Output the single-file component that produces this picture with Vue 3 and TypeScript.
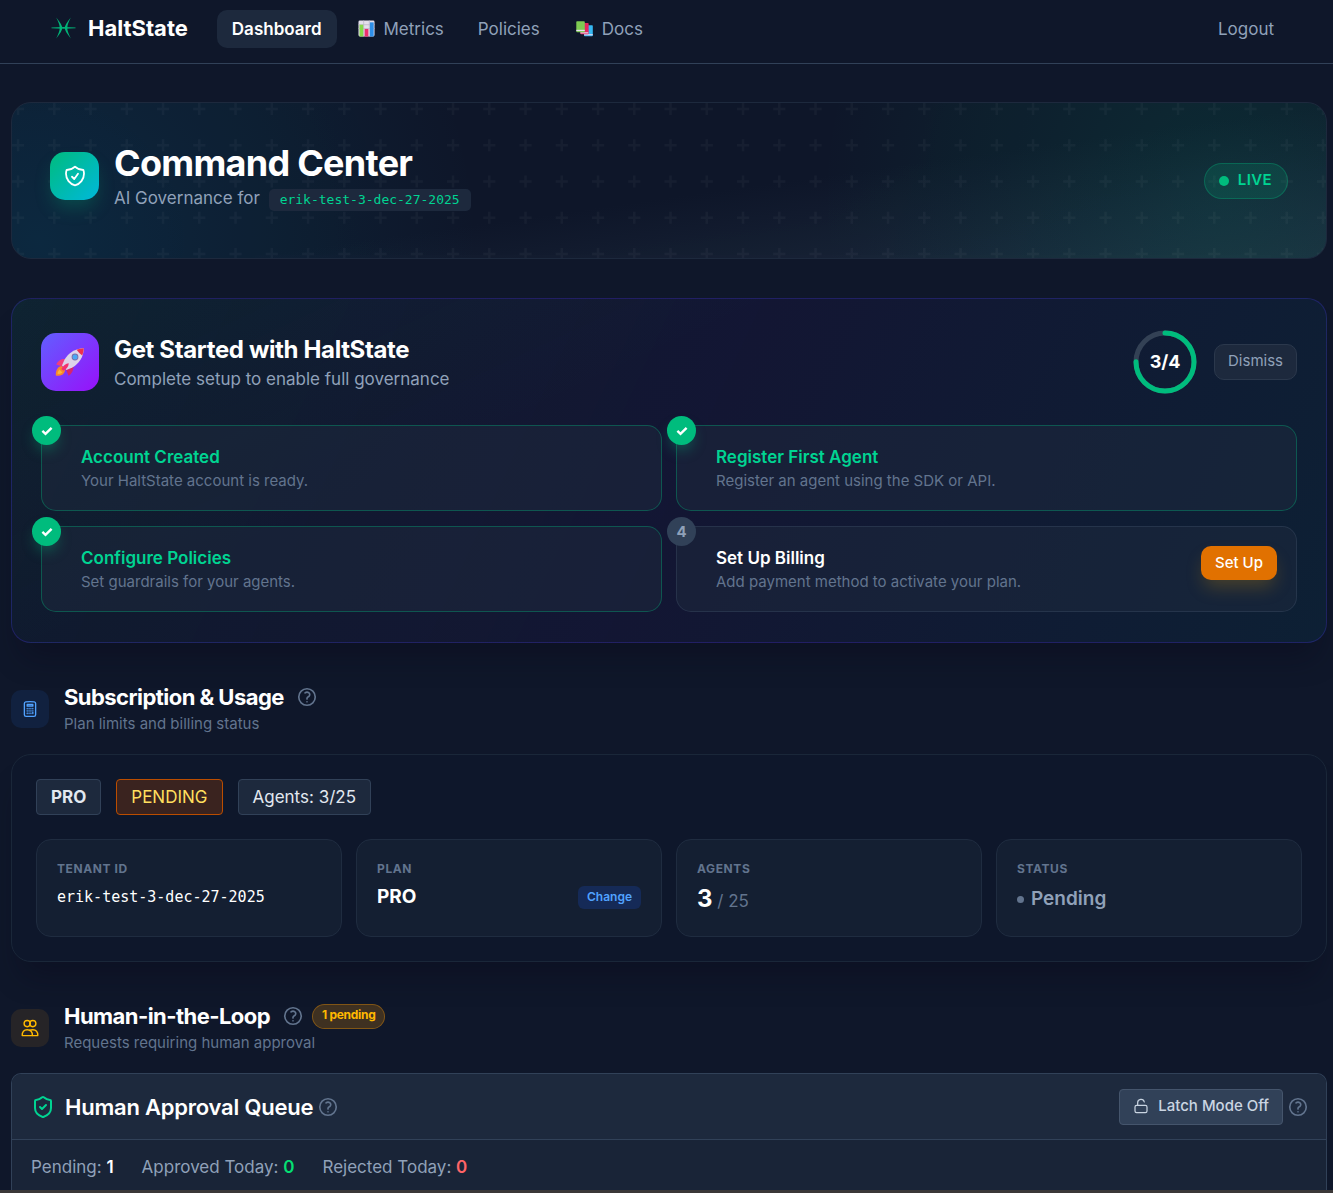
<script setup lang="ts">
import { computed, ref } from 'vue'

interface Step {
  id: number
  title: string
  text: string
  done: boolean
}

const tenantId = 'erik-test-3-dec-27-2025'

const steps = ref<Step[]>([
  { id: 1, title: 'Account Created', text: 'Your HaltState account is ready.', done: true },
  { id: 2, title: 'Register First Agent', text: 'Register an agent using the SDK or API.', done: true },
  { id: 3, title: 'Configure Policies', text: 'Set guardrails for your agents.', done: true },
  { id: 4, title: 'Set Up Billing', text: 'Add payment method to activate your plan.', done: false },
])

const doneCount = computed(() => steps.value.filter((s) => s.done).length)
const circumference = 2 * Math.PI * 29
const ringDash = computed(
  () => `${(doneCount.value / steps.value.length) * circumference} ${circumference}`,
)

const helpPath =
  'M9.879 7.519c1.171-1.025 3.071-1.025 4.242 0 1.172 1.025 1.172 2.687 0 3.712-.203.179-.43.326-.67.442-.745.361-1.45.999-1.45 1.827v.75M21 12a9 9 0 11-18 0 9 9 0 0118 0zm-9 5.25h.008v.008H12v-.008z'
</script>

<template>
  <div class="page">
    <header class="topbar">
      <a class="brand" href="#">
        <svg class="brand-mark" viewBox="0 0 26 22" aria-hidden="true">
          <path d="M0.5 10.6 L13 10 L25.5 10.6 L25.5 11.2 L13 11.8 L0.5 11.2Z" />
          <path d="M5.4 0.2 Q12.6 9 11.4 11 Q12.6 13 5.4 21.8 Q9.4 14 9 11 Q9.4 8 5.4 0.2Z" />
          <path d="M20.6 0.2 Q13.4 9 14.6 11 Q13.4 13 20.6 21.8 Q16.6 14 17 11 Q16.6 8 20.6 0.2Z" />
        </svg>
        <span>HaltState</span>
      </a>
      <nav class="links">
        <a class="link active" href="#">Dashboard</a>
        <a class="link" href="#">
          <svg class="emoji" viewBox="0 0 18 18" aria-hidden="true">
            <rect x="0.5" y="0.5" width="17" height="17" rx="1.5" fill="#e4dfec" />
            <path d="M0.5 5h17M0.5 9h17M6 0.5v17M12 0.5v17" stroke="#bdb6ca" stroke-width="0.8" />
            <rect x="1.6" y="5" width="4" height="12.5" fill="#86d94a" />
            <rect x="7" y="9.5" width="4" height="8" fill="#ec2f6e" />
            <rect x="12.6" y="2.5" width="4" height="15" fill="#2e8fe8" />
          </svg>
          <span>Metrics</span>
        </a>
        <a class="link" href="#">Policies</a>
        <a class="link" href="#">
          <svg class="emoji" viewBox="0 0 18 18" aria-hidden="true">
            <rect x="8.5" y="5.5" width="9.3" height="11.6" rx="0.8" fill="#35b8f2" />
            <path d="M8.5 15h9.3v1.2H8.5z" fill="#e6d9f5" />
            <rect x="4.6" y="3.2" width="8.8" height="12" rx="0.8" fill="#e5265f" />
            <path d="M4.6 13h8.4v1.2H4.6z" fill="#e8dff0" />
            <rect x="0.3" y="1.3" width="9" height="11.6" rx="0.8" fill="#7ecb52" />
            <path d="M0.3 10.4h9v1.3h-9z" fill="#e8e2f0" />
          </svg>
          <span>Docs</span>
        </a>
      </nav>
      <a class="link" href="#">Logout</a>
    </header>

    <main class="content">
      <section class="hero">
        <svg class="hero-pattern" aria-hidden="true">
          <defs>
            <pattern id="plus" width="145" height="145" viewBox="0 0 120 120" patternUnits="userSpaceOnUse">
              <path
                d="M0 5h10M30 5h10M60 5h10M90 5h10M0 35h10M30 35h10M60 35h10M90 35h10M0 65h10M30 65h10M60 65h10M90 65h10M0 95h10M30 95h10M60 95h10M90 95h10M5 0v10M35 0v10M65 0v10M95 0v10M5 30v10M35 30v10M65 30v10M95 30v10M5 60v10M35 60v10M65 60v10M95 60v10M5 90v10M35 90v10M65 90v10M95 90v10"
                stroke="#fff"
                stroke-width="2"
              />
            </pattern>
          </defs>
          <rect width="100%" height="100%" fill="url(#plus)" />
        </svg>
        <div class="hero-main">
          <div class="hero-icon">
            <svg class="line-icon" viewBox="0 0 24 24" width="24" height="24" aria-hidden="true">
              <path d="M9 12.75L11.25 15 15 9.75m-3-7.036A11.959 11.959 0 013.598 6 11.99 11.99 0 003 9.749c0 5.592 3.824 10.29 9 11.623 5.176-1.332 9-6.03 9-11.622 0-1.31-.21-2.571-.598-3.751h-.152c-3.196 0-6.1-1.248-8.25-3.285z" />
            </svg>
          </div>
          <div>
            <h1>Command Center</h1>
            <p>AI Governance for <code>{{ tenantId }}</code></p>
          </div>
        </div>
        <div class="live"><i class="live-dot"></i>LIVE</div>
      </section>

      <section class="setup">
        <div class="setup-head">
          <div class="rocket">
            <svg viewBox="0 0 30 30" width="30" height="30" aria-hidden="true">
              <path d="M7 19 C3 19 .8 23 .8 28 Q.8 29 2 28.8 C7 28.8 9.6 27 10 23Z" fill="#f9872b" />
              <path d="M4.4 22.4 Q2.6 24.4 2.6 27 Q5.4 27 7.4 25.4Z" fill="#fcb53b" />
              <path d="M10 12 Q4 11.5 1.2 17.6 L9 20 12 14Z" fill="#f23e7c" />
              <path d="M18.5 20 Q18 26 13.6 28.8 L10.4 21 16 18Z" fill="#d6266c" />
              <path d="M28.8 1.2 C20 1.4 13.4 6 9.6 12.6 L7 18.6 11.4 23 17.4 20.4 C24 16.6 28.6 10 28.8 1.2Z" fill="#ddd3ea" />
              <path d="M28.8 1.2 C26 1.3 23.6 1.9 21.6 2.8 Q24 6.4 27.2 8.4 Q28.7 5 28.8 1.2Z" fill="#ef2f4c" />
              <path d="M13.8 16.2 Q9 16.6 6.4 22 L8.4 23.8 Q13.4 21 13.8 16.2Z" fill="#f4316d" />
              <circle cx="20" cy="10" r="3.4" fill="#7a6fa8" />
              <circle cx="20" cy="10" r="2.5" fill="#4aa8f4" />
            </svg>
          </div>
          <div class="setup-title">
            <h2>Get Started with HaltState</h2>
            <p>Complete setup to enable full governance</p>
          </div>
          <div class="ring">
            <svg viewBox="0 0 68 68" width="68" height="68" aria-hidden="true">
              <circle cx="34" cy="34" r="29" stroke="#334155" />
              <circle
                cx="34"
                cy="34"
                r="29"
                stroke="#00bc7d"
                stroke-linecap="round"
                :stroke-dasharray="ringDash"
                transform="rotate(-90 34 34)"
              />
            </svg>
            <span>{{ doneCount }}/{{ steps.length }}</span>
          </div>
          <button class="dismiss" type="button">Dismiss</button>
        </div>

        <div class="steps">
          <article v-for="step in steps" :key="step.id" class="step" :class="{ done: step.done }">
            <span class="step-badge">
              <svg v-if="step.done" viewBox="0 0 12 12" width="12" height="12" aria-hidden="true">
                <path d="M1.4 5.8 L4.5 8.8 L10.6 2.8" />
              </svg>
              <template v-else>{{ step.id }}</template>
            </span>
            <div class="step-text">
              <h3>{{ step.title }}</h3>
              <p>{{ step.text }}</p>
            </div>
            <button v-if="!step.done" class="setup-btn" type="button">Set Up</button>
          </article>
        </div>
      </section>

      <div class="section-head">
        <div class="section-icon blue">
          <svg class="line-icon" viewBox="0 0 24 24" width="18" height="18" aria-hidden="true">
            <path d="M15.75 15.75V18m-7.5-6.75h.008v.008H8.25v-.008zm0 2.25h.008v.008H8.25V13.5zm0 2.25h.008v.008H8.25v-.008zm0 2.25h.008v.008H8.25V18zm2.498-6.75h.007v.008h-.007v-.008zm0 2.25h.007v.008h-.007V13.5zm0 2.25h.007v.008h-.007v-.008zm0 2.25h.007v.008h-.007V18zm2.504-6.75h.008v.008h-.008v-.008zm0 2.25h.008v.008h-.008V13.5zm0 2.25h.008v.008h-.008v-.008zm0 2.25h.008v.008h-.008V18zm2.498-6.75h.008v.008h-.008v-.008zm0 2.25h.008v.008h-.008V13.5zM8.25 6h7.5v2.25h-7.5V6zM12 2.25c-1.892 0-3.758.11-5.593.322C5.307 2.7 4.5 3.65 4.5 4.757V19.5a2.25 2.25 0 002.25 2.25h10.5a2.25 2.25 0 002.25-2.25V4.757c0-1.108-.806-2.057-1.907-2.185A48.507 48.507 0 0012 2.25z" />
          </svg>
        </div>
        <div>
          <div class="section-title">
            <h2>Subscription &amp; Usage</h2>
            <button class="help" type="button" aria-label="About subscription and usage">
              <svg class="line-icon" viewBox="0 0 24 24" width="22" height="22"><path :d="helpPath" /></svg>
            </button>
          </div>
          <p>Plan limits and billing status</p>
        </div>
      </div>

      <section class="panel">
        <div class="tags">
          <span class="tag strong">PRO</span>
          <span class="tag warn">PENDING</span>
          <span class="tag">Agents: 3/25</span>
        </div>
        <div class="stats">
          <div class="stat">
            <h4>Tenant ID</h4>
            <div class="stat-value mono">{{ tenantId }}</div>
          </div>
          <div class="stat">
            <h4>Plan</h4>
            <div class="stat-value plan">
              <strong>PRO</strong>
              <button class="change" type="button">Change</button>
            </div>
          </div>
          <div class="stat">
            <h4>Agents</h4>
            <div class="stat-value agents"><strong>3</strong> / 25</div>
          </div>
          <div class="stat">
            <h4>Status</h4>
            <div class="stat-value status"><i class="status-dot"></i>Pending</div>
          </div>
        </div>
      </section>

      <div class="section-head">
        <div class="section-icon amber">
          <svg class="line-icon thin" viewBox="0 0 18 18" width="18" height="18" aria-hidden="true">
            <circle cx="6.2" cy="4.6" r="3.1" />
            <circle cx="11.8" cy="4.6" r="3.1" />
            <path d="M1.2 16.6 C1.2 12.6 3 10.8 6.2 10.8 S11.4 12.6 11.4 16.6Z" />
            <path d="M8.4 11.4 Q9.8 10.8 11.8 10.8 C15 10.8 16.8 12.6 16.8 16.6 H11.4" />
          </svg>
        </div>
        <div>
          <div class="section-title">
            <h2>Human-in-the-Loop</h2>
            <button class="help" type="button" aria-label="About human-in-the-loop">
              <svg class="line-icon" viewBox="0 0 24 24" width="22" height="22"><path :d="helpPath" /></svg>
            </button>
            <span class="pending-pill">1 pending</span>
          </div>
          <p>Requests requiring human approval</p>
        </div>
      </div>

      <section class="queue">
        <div class="queue-head">
          <svg class="queue-shield" viewBox="0 0 24 24" width="24" height="24" aria-hidden="true">
            <path d="M20 13c0 5-3.5 7.5-7.66 8.95a1 1 0 0 1-.67-.01C7.5 20.5 4 18 4 13V6a1 1 0 0 1 1-1c2 0 4.5-1.2 6.24-2.72a1.17 1.17 0 0 1 1.52 0C14.51 3.81 17 5 19 5a1 1 0 0 1 1 1z" />
            <path d="m9 12 2 2 4-4" />
          </svg>
          <h3>Human Approval Queue</h3>
          <button class="help" type="button" aria-label="About the approval queue">
            <svg class="line-icon" viewBox="0 0 24 24" width="22" height="22"><path :d="helpPath" /></svg>
          </button>
          <button class="latch" type="button">
            <svg class="line-icon" viewBox="0 0 24 24" width="16" height="16" aria-hidden="true">
              <rect x="3" y="11" width="18" height="11" rx="2.4" />
              <path d="M7 11V7a5 5 0 0 1 9.9-1" />
            </svg>
            Latch Mode Off
          </button>
          <button class="help" type="button" aria-label="About latch mode">
            <svg class="line-icon" viewBox="0 0 24 24" width="22" height="22"><path :d="helpPath" /></svg>
          </button>
        </div>
        <div class="queue-counts">
          <span>Pending: <b>1</b></span>
          <span>Approved Today: <b class="ok">0</b></span>
          <span>Rejected Today: <b class="bad">0</b></span>
        </div>
      </section>
    </main>
    <div class="bottom-edge"></div>
  </div>
</template>

<style>
body {
  margin: 0;
  background: #0f172a;
}
</style>

<style scoped>
* {
  box-sizing: border-box;
}

h1,
h2,
h3,
h4,
p {
  margin: 0;
}

button {
  font: inherit;
  cursor: pointer;
}

.page {
  display: flex;
  flex-direction: column;
  min-height: 100vh;
  background: #0f172a;
  color: #fff;
  font-family: Inter, 'Liberation Sans', sans-serif;
  font-size: 17px;
  line-height: 24px;
}

.line-icon {
  display: block;
  fill: none;
  stroke: currentColor;
  stroke-width: 1.8;
  stroke-linecap: round;
  stroke-linejoin: round;
}

.line-icon.thin {
  stroke-width: 1.4;
}

/* Top bar */
.topbar {
  display: flex;
  align-items: center;
  height: 64px;
  padding: 0 44px 6px 51px;
  border-bottom: 1px solid #314158;
}

.brand {
  display: flex;
  align-items: center;
  gap: 12px;
  margin-right: 29px;
  padding-bottom: 2px;
  color: #fff;
  font-size: 22px;
  font-weight: 700;
  text-decoration: none;
}

.brand-mark {
  width: 25px;
  height: 22px;
  fill: #00b377;
}

.links {
  display: flex;
  flex: 1;
  gap: 4px;
}

.link {
  display: flex;
  align-items: center;
  gap: 7px;
  height: 38px;
  padding: 0 15px;
  border-radius: 10px;
  color: #90a1b9;
  text-decoration: none;
}

.link.active {
  background: #1d293d;
  color: #fff;
  font-weight: 600;
}

.emoji {
  width: 17px;
  height: 17px;
  margin: 0 2px;
}

.content {
  display: flex;
  flex: 1;
  flex-direction: column;
  padding: 38px 6px 0 11px;
}

/* Hero */
.hero {
  position: relative;
  display: flex;
  align-items: center;
  justify-content: space-between;
  height: 157px;
  padding: 0 38px;
  overflow: hidden;
  border: 1px solid #1d293d;
  border-radius: 20px;
  background:
    radial-gradient(circle at 92% 60%, rgba(0, 188, 125, 0.13), transparent 33%),
    radial-gradient(circle at 2% 90%, rgba(0, 146, 184, 0.15), transparent 34%),
    linear-gradient(172deg, #0f172a 55%, #1d293d 100%);
}

.hero-pattern {
  position: absolute;
  inset: 0;
  width: 100%;
  height: 100%;
  opacity: 0.03;
}

.hero-main {
  position: relative;
  display: flex;
  align-items: center;
  gap: 15px;
  margin-bottom: 10px;
}

.hero-icon {
  display: grid;
  place-items: center;
  width: 49px;
  height: 48px;
  border-radius: 15px;
  background: linear-gradient(135deg, #00bc7d, #00b8db);
  box-shadow: 0 10px 18px -3px rgba(0, 188, 125, 0.25);
}

.hero-main h1 {
  font-size: 36px;
  font-weight: 700;
  letter-spacing: -0.02em;
  line-height: 44px;
}

.hero-main p {
  color: #90a1b9;
  line-height: 26px;
}

.hero-main code {
  display: inline-block;
  margin-left: 4px;
  padding: 0 11px;
  border-radius: 5px;
  background: #1d293d;
  color: #00d492;
  font-family: 'DejaVu Sans Mono', 'Liberation Mono', monospace;
  font-size: 13px;
  line-height: 22px;
}

.live {
  position: relative;
  display: flex;
  align-items: center;
  gap: 9px;
  height: 36px;
  padding: 0 15px 2px 14px;
  border: 1px solid rgba(0, 188, 125, 0.3);
  border-radius: 18px;
  background: rgba(0, 188, 125, 0.15);
  color: #00d492;
  font-size: 15px;
  font-weight: 600;
  letter-spacing: 0.025em;
}

.live-dot {
  width: 10px;
  height: 10px;
  margin-top: 2px;
  border-radius: 50%;
  background: #00bc7d;
}

/* Setup checklist */
.setup {
  margin-top: 39px;
  padding: 29px 29px 30px;
  border: 1px solid rgba(79, 57, 246, 0.25);
  border-radius: 20px;
  background:
    linear-gradient(155deg, rgba(0, 188, 125, 0.05), transparent 38%),
    linear-gradient(115deg, rgba(15, 50, 60, 0.15), rgba(31, 20, 80, 0.25) 52%, rgba(8, 60, 85, 0.25)),
    #0f172a;
  box-shadow: 0 24px 30px -12px rgba(10, 8, 25, 0.4);
}

.setup-head {
  display: flex;
  align-items: center;
  gap: 15px;
  margin-bottom: 29px;
}

.rocket {
  display: grid;
  place-items: center;
  width: 58px;
  height: 58px;
  border-radius: 15px;
  background: linear-gradient(135deg, #615fff, #9810fa);
}

.setup-title {
  flex: 1;
  padding-top: 2px;
}

.setup-title h2 {
  font-size: 24px;
  font-weight: 700;
  letter-spacing: -0.015em;
  line-height: 32px;
}

.setup-title p {
  color: #90a1b9;
  line-height: 26px;
}

.ring {
  position: relative;
  display: grid;
  place-items: center;
}

.ring svg {
  display: block;
  fill: none;
  stroke-width: 5;
}

.ring span {
  position: absolute;
  font-size: 18px;
  font-weight: 700;
}

.dismiss {
  height: 36px;
  padding: 0 13px 2px;
  border: 1px solid #2b384c;
  border-radius: 10px;
  background: #1d293d;
  color: #90a1b9;
  font-size: 15px;
}

.steps {
  display: grid;
  grid-template-columns: 1fr 1fr;
  gap: 15px 14px;
}

.step {
  position: relative;
  display: flex;
  align-items: flex-start;
  padding: 19px 19px 17px 39px;
  border: 1px solid rgba(69, 85, 108, 0.35);
  border-radius: 15px;
  background: rgba(29, 41, 61, 0.5);
}

.step.done {
  border-color: rgba(0, 188, 125, 0.35);
}

.step-badge {
  position: absolute;
  top: -10px;
  left: -10px;
  display: grid;
  place-items: center;
  width: 29px;
  height: 29px;
  border-radius: 50%;
  background: #314158;
  color: #90a1b9;
  font-size: 15px;
  font-weight: 700;
}

.step-badge svg {
  fill: none;
  stroke: #fff;
  stroke-width: 2.4;
}

.done .step-badge {
  background: #00bc7d;
  box-shadow: 0 8px 14px -3px rgba(0, 188, 125, 0.35);
}

.step-text {
  flex: 1;
}

.step-text h3 {
  font-size: 17px;
  font-weight: 600;
  line-height: 24px;
}

.done h3 {
  color: #00d492;
}

.step-text p {
  color: #62748e;
  font-size: 15px;
  line-height: 24px;
}

.setup-btn {
  height: 34px;
  padding: 0 14px;
  border: 0;
  border-radius: 10px;
  background: #e17100;
  color: #fff;
  font-size: 15px;
  font-weight: 500;
  box-shadow: 0 10px 18px -3px rgba(225, 150, 0, 0.25);
}

/* Section headings */
.section-head {
  display: flex;
  align-items: center;
  gap: 15px;
  margin-top: 39px;
}

.section-icon {
  display: grid;
  place-items: center;
  width: 38px;
  height: 38px;
  border-radius: 10px;
}

.section-icon.blue {
  background: #11213f;
  color: #51a2ff;
}

.section-icon.amber {
  background: #262427;
  color: #ffb900;
}

.section-title {
  display: flex;
  align-items: center;
  height: 30px;
  gap: 12px;
}

.section-title h2 {
  font-size: 22px;
  font-weight: 700;
  letter-spacing: -0.025em;
}

.section-head p {
  color: #62748e;
  font-size: 15px;
  line-height: 23px;
}

.help {
  display: block;
  padding: 0;
  border: 0;
  background: none;
  color: #62748e;
}

.pending-pill {
  display: flex;
  align-items: center;
  height: 25px;
  margin-left: -4px;
  padding: 0 9px 2px;
  border: 1px solid rgba(254, 154, 0, 0.35);
  border-radius: 13px;
  background: rgba(254, 154, 0, 0.2);
  color: #ffb900;
  font-size: 12px;
  font-weight: 700;
  letter-spacing: -0.025em;
}

/* Subscription panel */
.panel {
  margin-top: 19px;
  padding: 24px;
  border: 1px solid #1a2739;
  border-radius: 20px;
  background: #0e172b;
  box-shadow: 0 24px 30px -12px rgba(10, 8, 25, 0.4);
}

.tags {
  display: flex;
  gap: 15px;
}

.tag {
  display: flex;
  align-items: center;
  height: 36px;
  padding: 0 14px;
  border: 1px solid #314158;
  border-radius: 4px;
  background: #1d293d;
  color: #e2e8f0;
}

.tag.strong {
  font-weight: 700;
}

.tag.warn {
  border-color: #bb4d00;
  background: #3a231f;
  color: #ffdf5e;
}

.stats {
  display: grid;
  grid-template-columns: repeat(4, 1fr);
  gap: 14px;
  margin-top: 24px;
}

.stat {
  height: 98px;
  padding: 19px 20px;
  border: 1px solid #1f2c40;
  border-radius: 15px;
  background: #141f32;
}

.stat h4 {
  color: #62748e;
  font-size: 12px;
  font-weight: 700;
  letter-spacing: 0.05em;
  line-height: 20px;
  text-transform: uppercase;
}

.stat-value {
  line-height: 36px;
}

.mono {
  font-family: 'DejaVu Sans Mono', 'Liberation Mono', monospace;
  font-size: 15px;
}

.plan {
  display: flex;
  align-items: center;
  justify-content: space-between;
  font-size: 19px;
}

.change {
  height: 23px;
  padding: 0 9px;
  border: 0;
  border-radius: 6px;
  background: #152a57;
  color: #51a2ff;
  font-size: 12px;
  font-weight: 600;
  line-height: 22px;
}

.agents {
  color: #62748e;
  line-height: 40px;
}

.agents strong {
  color: #fff;
  font-size: 24px;
}

.status {
  display: flex;
  align-items: center;
  gap: 7px;
  color: #90a1b9;
  font-size: 19px;
  font-weight: 600;
  line-height: 40px;
}

.status-dot {
  width: 7px;
  height: 7px;
  border-radius: 50%;
  background: #62748e;
}

/* Approval queue */
.queue {
  flex: 1;
  margin-top: 19px;
  border: 1px solid #314158;
  border-bottom: 0;
  border-radius: 10px 10px 0 0;
  background: #192437;
}

.queue-head {
  display: flex;
  align-items: center;
  height: 66px;
  padding: 0 17px 0 19px;
  border-bottom: 1px solid #314158;
  border-radius: 9px 9px 0 0;
  background: #1d293d;
}

.queue-shield {
  fill: none;
  stroke: #00d492;
  stroke-width: 2;
  stroke-linecap: round;
  stroke-linejoin: round;
}

.queue-head h3 {
  margin: 0 4px 0 10px;
  font-size: 22px;
  font-weight: 600;
  letter-spacing: -0.01em;
}

.latch {
  display: flex;
  align-items: center;
  gap: 9px;
  height: 36px;
  margin: 0 4px 0 auto;
  padding: 0 13px 2px;
  border: 1px solid #45556c;
  border-radius: 4px;
  background: #314158;
  color: #cad5e2;
  font-size: 15px;
  font-weight: 500;
}

.queue-counts {
  display: flex;
  gap: 28px;
  padding: 15px 19px 11px;
  color: #90a1b9;
}

.queue-counts b {
  color: #fff;
  font-weight: 600;
}

.queue-counts .ok {
  color: #05df72;
}

.queue-counts .bad {
  color: #ff6467;
}

.bottom-edge {
  height: 3px;
  background: #3b3838;
}
</style>
